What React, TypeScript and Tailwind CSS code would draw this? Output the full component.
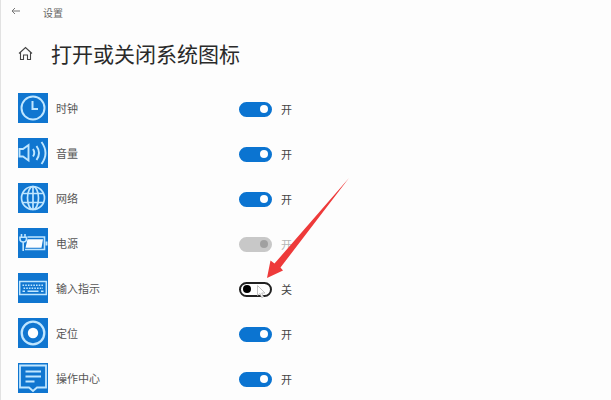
import React, { useState } from 'react';

const iconClass = 'block size-[30px] shrink-0 bg-[#1076d0] fill-none stroke-[#bfe6ff]';

function ClockIcon() {
  return (
    <svg viewBox="0 0 30 30" className={iconClass} strokeWidth="2" aria-hidden="true">
      <circle cx="15" cy="15" r="11.5" />
      <path d="M14.5 8V16H20" />
    </svg>
  );
}

function VolumeIcon() {
  return (
    <svg viewBox="0 0 30 30" className={iconClass} strokeWidth="1.9" aria-hidden="true">
      <path d="M1.5 11H5L10.5 7V22.5L5 18.5H1.5Z" />
      <path d="M15 11Q17.5 14.8 15 18.6" />
      <path d="M18.5 8Q23.5 15 18.5 22" />
      <path d="M23.5 4Q31.5 15 23.5 26" />
    </svg>
  );
}

function NetworkIcon() {
  return (
    <svg viewBox="0 0 30 30" className={iconClass} strokeWidth="1.7" aria-hidden="true">
      <circle cx="15" cy="15" r="11.5" />
      <ellipse cx="15" cy="15" rx="5.5" ry="11.5" />
      <path d="M15 3.5V26.5M4.5 10.5H25.5M4.5 19.5H25.5" />
    </svg>
  );
}

function PowerIcon() {
  return (
    <svg viewBox="0 0 30 30" className={iconClass} strokeWidth="1.6" aria-hidden="true">
      <path d="M9.5 9H26.5V21.5H7" />
      <path d="M28.5 13.5V17.5" strokeWidth="2" />
      <path d="M9.5 11.3H25L23.5 19.7H7.5Z" fill="#fafdff" stroke="none" />
      <path d="M3.5 6V9M7 6V9M5.2 14V23" />
      <path d="M2 9.3H8.5V11Q8.5 14 5.2 14Q2 14 2 11Z" fill="#1076d0" />
    </svg>
  );
}

function KeyboardIcon() {
  return (
    <svg viewBox="0 0 30 30" className={iconClass} strokeWidth="1.5" aria-hidden="true">
      <rect x="1.7" y="8.5" width="26.6" height="13" />
      <path d="M4.5 12.3H26M5.5 15.2H25" strokeDasharray="1.6 1.1" />
      <path d="M4.5 18.3H7M9.5 18.3H20.5M23 18.3H25.5" />
    </svg>
  );
}

function LocationIcon() {
  return (
    <svg viewBox="0 0 30 30" className={iconClass} strokeWidth="2.3" aria-hidden="true">
      <circle cx="15" cy="15" r="11.3" />
      <circle cx="15" cy="15" r="5.2" fill="#fff" stroke="none" />
    </svg>
  );
}

function ActionCenterIcon() {
  return (
    <svg viewBox="0 0 30 30" className={iconClass} strokeWidth="1.8" aria-hidden="true">
      <path d="M2 2.5H28V24.5H19L15 28L11 24.5H2Z" />
      <path d="M7.5 8.5H23M7.5 13.5H23M7.5 18.5H16.5" />
    </svg>
  );
}

const items = [
  { id: 'clock', label: '时钟', icon: ClockIcon, on: true },
  { id: 'volume', label: '音量', icon: VolumeIcon, on: true },
  { id: 'network', label: '网络', icon: NetworkIcon, on: true },
  { id: 'power', label: '电源', icon: PowerIcon, on: true, disabled: true },
  { id: 'input', label: '输入指示', icon: KeyboardIcon, on: false, pointer: true },
  { id: 'location', label: '定位', icon: LocationIcon, on: true },
  { id: 'action', label: '操作中心', icon: ActionCenterIcon, on: true },
];

type Item = (typeof items)[number];

function Pointer() {
  return (
    <>
      <svg
        viewBox="0 0 82 100"
        className="pointer-events-none absolute bottom-8 left-7 h-[100px] w-[82px] fill-[#ee3a3a]"
        aria-hidden="true"
      >
        <path d="M82 0L13.5 89.5L16 92.5L0 100L3.5 82.5L7.5 85.5Z" />
      </svg>
      <svg
        viewBox="0 0 9 14"
        className="pointer-events-none absolute top-5 left-[18px] h-[14px] w-[9px] fill-white stroke-[#b5b5b5]"
        strokeWidth="0.8"
        aria-hidden="true"
      >
        <path d="M0.5 0.5V10.5L3 8.5L4.7 12.7L6.4 12L4.7 8H8Z" />
      </svg>
    </>
  );
}

function SettingRow({ item }: { item: Item }) {
  const [on, setOn] = useState(item.on);
  const Icon = item.icon;

  return (
    <li className="flex h-[45px] items-center">
      <Icon />
      <label htmlFor={item.id} className="w-[191px] shrink-0 pt-[2px] pl-2 text-[11px] text-[#555]">
        {item.label}
      </label>
      <div className="relative flex h-full items-center gap-[9px] pt-[3px]">
        <input
          id={item.id}
          type="checkbox"
          role="switch"
          checked={on}
          disabled={item.disabled}
          onChange={(e) => setOn(e.target.checked)}
          className="flex h-[15px] w-[33px] appearance-none items-center rounded-full border-2 border-[#222] bg-white px-[2px] before:size-2 before:rounded-full before:bg-black checked:justify-end checked:border-[#0b74d1] checked:bg-[#0b74d1] checked:before:bg-white disabled:border-[#c8c8c8] disabled:bg-[#c8c8c8] disabled:before:bg-[#a0a0a0]"
        />
        <span className={item.disabled ? 'pt-px text-[11px] text-[#b5b5b5]' : 'pt-px text-[11px] text-[#444]'}>
          {on ? '开' : '关'}
        </span>
        {item.pointer && <Pointer />}
      </div>
    </li>
  );
}

export default function App() {
  return (
    <main className="min-h-screen overflow-hidden border-l border-[#e2e2e2] bg-[#fdfdfd] font-['Noto_Sans_CJK_SC',sans-serif]">
      <header className="flex items-center gap-[22px] pt-1 pl-[10px]">
        <button type="button" aria-label="返回" className="mb-1">
          <svg viewBox="0 0 10 10" className="block size-[10px] fill-none stroke-[#777]" aria-hidden="true">
            <path d="M9 5H1M4 2L1 5L4 8" />
          </svg>
        </button>
        <span className="text-[10px] leading-[18px] text-[#666]">设置</span>
      </header>

      <div className="flex items-center gap-[18px] pt-4 pb-[17px] pl-[17px]">
        <svg viewBox="0 0 15 15" className="block size-[15px] fill-none stroke-[#444]" strokeWidth="1.1" aria-hidden="true">
          <path d="M1 7.5L7.5 1.5L14 7.5M2.5 6.5V13.5H5.5V9H9.5V13.5H12.5V6.5" />
        </svg>
        <h1 className="text-[21px] leading-[30px] font-normal text-[#2a2a2a]">打开或关闭系统图标</h1>
      </div>

      <ul className="pl-[17px]">
        {items.map((item) => (
          <SettingRow key={item.id} item={item} />
        ))}
      </ul>
    </main>
  );
}
